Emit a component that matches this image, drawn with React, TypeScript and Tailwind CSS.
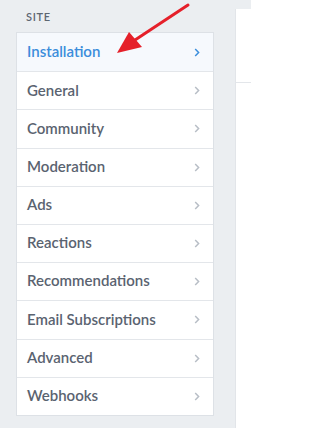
import React from "react";

const items = [
  "Installation",
  "General",
  "Community",
  "Moderation",
  "Ads",
  "Reactions",
  "Recommendations",
  "Email Subscriptions",
  "Advanced",
  "Webhooks",
];

function Chevron({ active }: { active: boolean }) {
  return (
    <svg width="6" height="9" viewBox="0 0 6 9" className="shrink-0">
      <path
        d="M1.2 1 L4.6 4.5 L1.2 8"
        fill="none"
        stroke={active ? "#3d8fdc" : "#b8bec6"}
        strokeWidth="1.5"
      />
    </svg>
  );
}

export default function App() {
  return (
    <div
      className="relative w-[251px] h-[428px] bg-[#ebeef1] flex overflow-hidden"
      style={{ fontFamily: "Lato, 'Open Sans', sans-serif" }}
    >
      <div className="ml-4 w-[198px] flex flex-col">
        <div className="pt-[10px] pl-[10px] mb-[8px] text-[11px] leading-[14px] font-semibold tracking-[0.06em] text-[#5d6671]">
          SITE
        </div>
        <div className="bg-white border border-[#dde1e6] flex flex-col">
          {items.map((t, i) => (
            <div
              key={t}
              className={`h-[38.2px] flex items-center justify-between pl-[10px] pr-[13px] ${
                i > 0 ? "border-t border-[#e3e6ea]" : ""
              } ${i === 0 ? "bg-[#f6f9fd] text-[#3b8ddb]" : "text-[#5a6370]"}`}
            >
              <span className="text-[15px] font-semibold pb-[2px]">{t}</span>
              <Chevron active={i === 0} />
            </div>
          ))}
        </div>
      </div>
      <div className="ml-[21px] mt-[9px] flex-1 bg-white border-l border-[#e2e5e9] flex flex-col">
        <div className="h-[74px] border-b border-[#e3e6ea]" />
      </div>
      <svg
        className="absolute left-0 top-0 pointer-events-none"
        width="251"
        height="428"
        viewBox="0 0 251 428"
      >
        <line x1="188" y1="5" x2="132" y2="42" stroke="#e5202a" strokeWidth="3" strokeLinecap="round" />
        <polygon points="117,53 129,32 142,47" fill="#e5202a" />
      </svg>
    </div>
  );
}
